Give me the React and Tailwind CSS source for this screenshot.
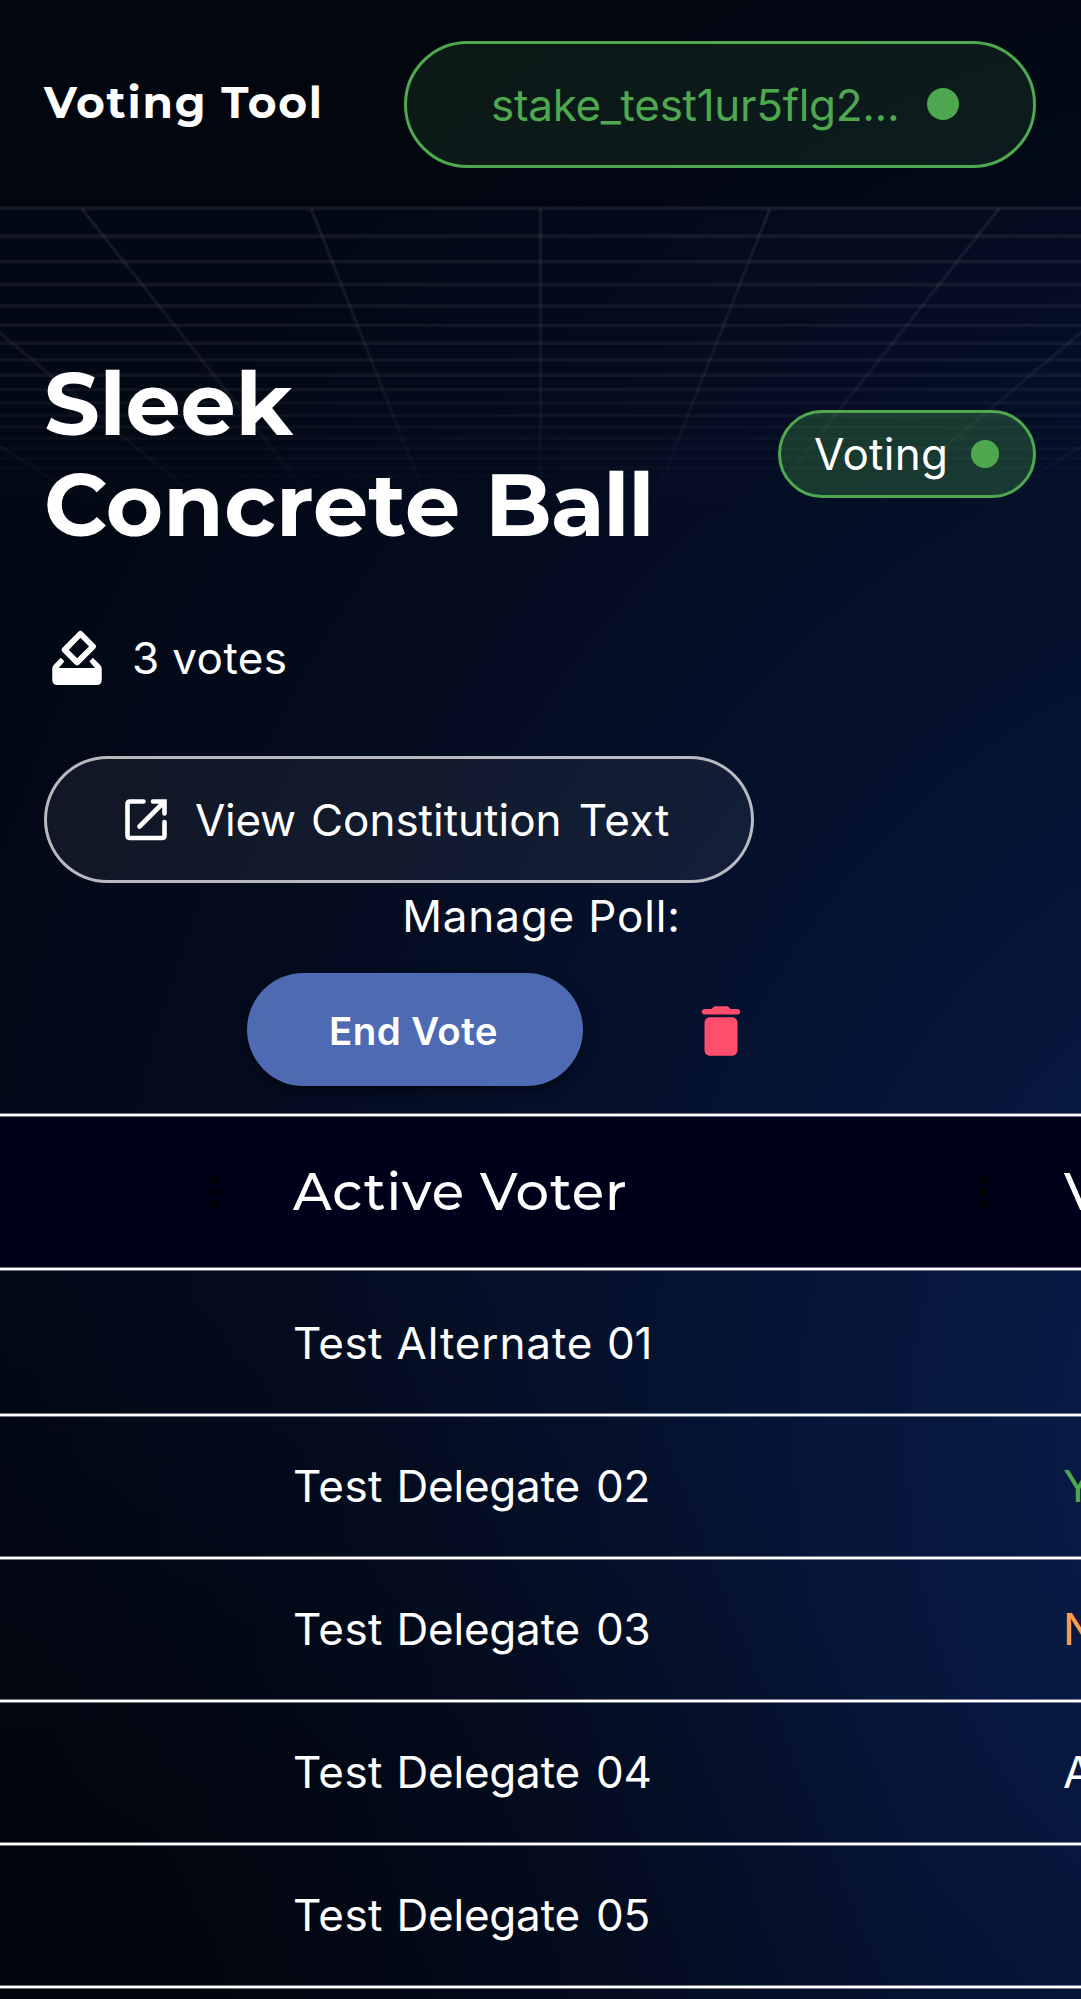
const rows = [
  { name: [['Test', 'tracking-[0.4px]'], ['Alternate', 'tracking-[0.9px]'], ['01', 'tracking-[-0.1px]']], vote: '', color: 'text-white', size: 'h-[146px] pt-[4px]' },
  { name: [['Test', 'tracking-[0.4px]'], ['Delegate', 'tracking-[-0.2px]'], ['02', 'ml-[2.5px] tracking-[-0.1px]']], vote: 'Yes', color: 'text-[#4fa84f]', size: 'h-[143px]' },
  { name: [['Test', 'tracking-[0.4px]'], ['Delegate', 'tracking-[-0.2px]'], ['03', 'ml-[2.5px] tracking-[-0.1px]']], vote: 'No', color: 'text-[#ff9d4d]', size: 'h-[143px]' },
  { name: [['Test', 'tracking-[0.4px]'], ['Delegate', 'tracking-[-0.2px]'], ['04', 'ml-[2.5px] tracking-[-0.1px]']], vote: 'Abstain', color: 'text-white', size: 'h-[143px]' },
  { name: [['Test', 'tracking-[0.4px]'], ['Delegate', 'tracking-[-0.2px]'], ['05', 'ml-[2.5px] tracking-[-0.1px]']], vote: '', color: 'text-white', size: 'h-[143px]' },
];

const HORIZON = 787;
const TOP = 208.5;
const horizontals = Array.from({ length: 27 }, (_, n) => HORIZON - 1000 / (1.728 + 0.0876 * n));
const columns = [-5, -4, -3, -2, -1, 0, 1, 2, 3, 4, 5];

function Grid() {
  return (
    <svg className="absolute left-0 top-0 h-[560px] w-[1081px]" viewBox="0 0 1081 560" fill="none">
      <defs>
        <linearGradient id="fade" x1="0" y1="208" x2="0" y2="520" gradientUnits="userSpaceOnUse">
          <stop offset="0" stopColor="white" />
          <stop offset="0.55" stopColor="white" stopOpacity="0.75" />
          <stop offset="1" stopColor="white" stopOpacity="0" />
        </linearGradient>
        <mask id="gridMask" maskUnits="userSpaceOnUse" x="0" y="0" width="1081" height="560">
          <rect y="200" width="1081" height="360" fill="url(#fade)" />
        </mask>
      </defs>
      <g mask="url(#gridMask)" stroke="#8c8c96" strokeOpacity="0.13">
        {horizontals.map((y, i) => (
          <path key={y} d={`M0 ${y}H1081`} strokeWidth={4 - i * 0.08} />
        ))}
        {columns.map((k) => (
          <path key={k} d={`M${540.5 + k * 229.4} ${TOP}L540.5 ${HORIZON}`} strokeWidth="3.4" />
        ))}
      </g>
    </svg>
  );
}

function Dots() {
  return (
    <svg className="h-[36px] w-[12px]" viewBox="0 0 12 36" fill="#020207">
      <circle cx="6" cy="5.5" r="4" />
      <circle cx="6" cy="18" r="4" />
      <circle cx="6" cy="30.5" r="4" />
    </svg>
  );
}

function Rule() {
  return <div className="h-[4px] w-full shrink-0 border-y border-white/45 bg-white bg-clip-padding" />;
}

export default function App() {
  return (
    <div className="h-[1999px] w-[1081px] bg-[#030815] bg-[radial-gradient(ellipse_950px_900px_at_0px_2050px,rgba(2,3,8,0.85)_0%,rgba(2,4,12,0.5)_50%,transparent_100%),radial-gradient(ellipse_1500px_1700px_at_1380px_1450px,#0a1d4e_0%,#081a45_20%,#05122f_50%,#040d22_72%,#030815_100%)] font-['Inter',sans-serif] text-[44px] leading-[66px] text-white">
      <div className="relative flex h-full flex-col overflow-hidden">
        <Grid />
        <header className="relative flex h-[207px] shrink-0 items-center justify-between bg-black/25 pl-[44px] pr-[45px] pt-[1px]">
          <div className="-mt-[5px] font-['Montserrat','Inter',sans-serif] text-[44px] font-bold tracking-[1.7px]">Voting Tool</div>
          <div className="flex h-[127px] w-[632px] items-center rounded-full border-[3px] border-[#4fa84f] bg-[#4fa84f]/12 pl-[84px] text-[#4fa84f]">
            <span className="w-[436px] whitespace-nowrap pt-[1px] tracking-[-0.3px]">stake_test1ur5flg2...</span>
            <span className="h-[32px] w-[32px] rounded-full bg-[#4fa84f]" />
          </div>
        </header>

        <section className="relative flex h-[906px] shrink-0 flex-col pl-[44px] pr-[45px] pt-[196px]">
          <div className="-mt-[1px] flex h-[104px] items-center justify-between">
            <h1 className="w-[640px] font-['Montserrat','Inter',sans-serif] text-[87.5px] font-bold leading-[101px]">
              <span className="tracking-[-0.3px]">Sleek</span>
              <br />
              <span className="tracking-[0.1px]">Concrete</span> <span className="tracking-[-1.4px]">Ball</span>
            </h1>
            <div className="flex h-[88px] w-[258px] items-center rounded-full border-[3px] border-[#4fa84f] bg-[#4fa84f]/28 pl-[33px]">
              <span className="w-[157px] tracking-[0.3px]">Voting</span>
              <span className="h-[28px] w-[28px] rounded-full bg-[#4fa84f]" />
            </div>
          </div>
          <div className="mt-[119px] flex h-[66px] items-center gap-[22px]">
            <svg className="size-[66px]" viewBox="0 0 24 24" fill="none">
              <path d="M13.250 3.200 17.850 7.800 12.050 13.600 7.500 9.050Z" stroke="white" strokeWidth="2.100" strokeLinejoin="round" />
              <path fillRule="evenodd" d="m6.100 11.900 1.300 1.300-2 2.400h13.100l-2-2.400 1.300-1.300 2.600 2.600q.6.6.6 1.400v4q0 1.900-1.900 1.900H4.900Q3 21.800 3 19.900v-4q0-.8.5-1.400Z" fill="white" />
            </svg>
            <span className="tracking-[0.4px]">3 votes</span>
          </div>
          <div className="mt-[65px] flex h-[127px] w-[710px] shrink-0 items-center rounded-full border-[3px] border-white/70 bg-white/6 pl-[78px]">
            <svg className="h-[42px] w-[42px]" viewBox="0 0 42 42" fill="none" stroke="white" strokeWidth="4.6" strokeLinecap="round">
              <path d="M18.5 2.500H5Q2.500 2.500 2.500 5V36.500Q2.500 39 5 39H37Q39.500 39 39.500 36.500V23" />
              <path d="M28 2.500H39.500V14.500M38 4 14.500 27.500" />
            </svg>
            <span className="ml-[28px] whitespace-nowrap tracking-[1.8px]">
              <span className="tracking-[-0.3px]">View</span> <span className="ml-[1px] tracking-[0px]">Constitution</span>{' '}
              <span className="ml-[3px] tracking-[0.6px]">Text</span>
            </span>
          </div>
          <div className="flex h-[66px] items-center justify-center pl-[3px] tracking-[0.85px]">Manage Poll:</div>
          <div className="mt-[24px] flex items-center pl-[203px]">
            <button className="h-[113px] w-[336px] rounded-full bg-[#4d6ab3] pr-[3px] pt-[2px] text-[38.5px] font-semibold tracking-[0.4px] shadow-[0_4px_12px_rgba(0,0,0,0.5)]">
              End Vote
            </button>
            <svg className="ml-[104.5px] mt-[2px] size-[66px]" viewBox="0 0 24 24" fill="#ff4d6d">
              <path d="M6 19c0 1.1.9 2 2 2h8c1.100 0 2-.9 2-2V9c0-1.100-.9-2-2-2H8c-1.100 0-2 .9-2 2v10zM18 4h-2.500l-.71-.71c-.18-.18-.44-.29-.7-.29H9.910c-.26 0-.52.110-.7.290L8.500 4H6c-.55 0-1 .45-1 1s.45 1 1 1h12c.55 0 1-.45 1-1s-.45-1-1-1z" />
            </svg>
          </div>
        </section>

        <div className="relative flex h-[158px] shrink-0 flex-col bg-[#00001a]">
          <Rule />
          <div className="flex flex-1 items-center">
            <div className="flex w-[266px] shrink-0 justify-end pr-[46px]">
              <Dots />
            </div>
            <div className="flex w-[770px] shrink-0 items-center justify-between pl-[27px] pr-[46px] font-['Montserrat','Inter',sans-serif] text-[52.8px] font-medium tracking-[0.9px]">
              <span className="-mt-[2px]">Active Voter</span>
              <Dots />
            </div>
            <div className="-mt-[2px] w-[45px] overflow-hidden pl-[28px] font-['Montserrat','Inter',sans-serif] text-[52.8px] font-medium">Vote</div>
          </div>
          <Rule />
        </div>
        {rows.map((r, i) => (
          <div key={i} className={`relative flex shrink-0 flex-col ${r.size}`}>
            <div className="flex flex-1 items-center pb-[2px]">
              <div className="w-[266px] shrink-0" />
              <div className="w-[770px] shrink-0 pl-[27px] tracking-[1.2px]">
                {r.name.map(([word, tracking], n) => (
                  <span key={word}>
                    {n > 0 && ' '}
                    <span className={tracking}>{word}</span>
                  </span>
                ))}
              </div>
              <div className={`w-[45px] overflow-hidden pl-[27px] ${r.color}`}>{r.vote}</div>
            </div>
            <Rule />
          </div>
        ))}
      </div>
    </div>
  );
}
